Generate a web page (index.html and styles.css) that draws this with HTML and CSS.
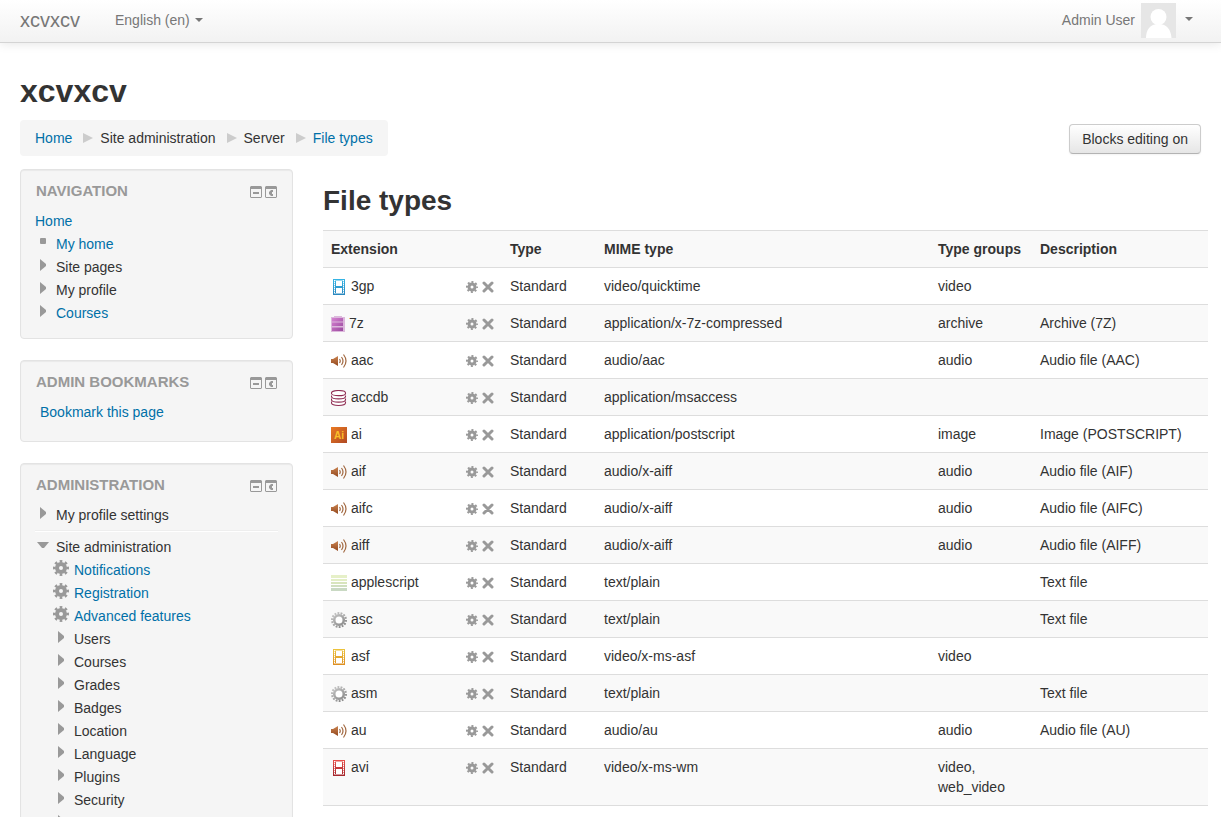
FILE: index.html
```
<!DOCTYPE html>
<html lang="en">

<head>
    <meta charset="UTF-8">
    <meta name="viewport" content="width=device-width, initial-scale=1.0">
    <title>File types</title>
    <link rel="stylesheet" href="styles.css">
</head>

<body>
    <!-- shared icons -->
    <svg class="sprite" aria-hidden="true">
        <defs>
            <linearGradient id="blue" x1="0" y1="0" x2="0" y2="1"><stop offset="0" stop-color="#35b5e5"/><stop offset="1" stop-color="#2a86bd"/></linearGradient>
            <linearGradient id="yellow" x1="0" y1="0" x2="0" y2="1"><stop offset="0" stop-color="#ecc43c"/><stop offset="1" stop-color="#dd8e22"/></linearGradient>
            <linearGradient id="red" x1="0" y1="0" x2="0" y2="1"><stop offset="0" stop-color="#e8504c"/><stop offset="1" stop-color="#a3262c"/></linearGradient>
            <linearGradient id="purple" x1="0" y1="0" x2="1" y2="1"><stop offset="0" stop-color="#d682d2"/><stop offset="1" stop-color="#9a4a9e"/></linearGradient>
            <linearGradient id="brown" x1="0" y1="0" x2="0" y2="1"><stop offset="0" stop-color="#c98350"/><stop offset="1" stop-color="#94491f"/></linearGradient>
            <linearGradient id="orange" x1="0" y1="0" x2="1" y2="1"><stop offset="0" stop-color="#ea7a22"/><stop offset="1" stop-color="#b04a24"/></linearGradient>
            <linearGradient id="grey" gradientUnits="userSpaceOnUse" x1="0" y1="0" x2="12" y2="16"><stop offset="0" stop-color="#cfcfcf"/><stop offset="1" stop-color="#858585"/></linearGradient>
        </defs>
        <symbol id="gear" viewBox="0 0 16 16">
            <circle cx="8" cy="8" r="4" fill="none" stroke="#999" stroke-width="4"/>
            <circle cx="8" cy="8" r="6.7" fill="none" stroke="#999" stroke-width="2.6" pathLength="16" stroke-dasharray="1 1" stroke-dashoffset=".5"/>
        </symbol>
        <symbol id="cross" viewBox="0 0 12 12">
            <path d="M2 2l8 8M10 2l-8 8" stroke="#999" stroke-width="3" stroke-linecap="round"/>
        </symbol>
        <symbol id="hide" viewBox="0 0 12 12">
            <path d="M1 0h10l1 1v10l-1 1H1l-1-1V1zM1 3v8h10V3z" fill="#999" fill-rule="evenodd"/>
            <path d="M3 6h6v2H3z" fill="#999"/>
        </symbol>
        <symbol id="dock" viewBox="0 0 12 12">
            <path d="M1 0h10l1 1v10l-1 1H1l-1-1V1zM1 3v8h10V3z" fill="#999" fill-rule="evenodd"/>
            <path d="M6 4h2v2H7v2h1v2H6L4 8V6z" fill="#999"/>
        </symbol>
        <symbol id="right" viewBox="0 0 16 16"><path d="M5 2l6 5v2l-6 5z" fill="#999"/></symbol>
        <symbol id="down" viewBox="0 0 16 16"><path d="M2 5h12l-5 6H7z" fill="#999"/></symbol>
        <symbol id="bullet" viewBox="0 0 16 16"><rect x="5" y="4" width="6" height="6" rx="1" fill="#999"/></symbol>
        <symbol id="audio" viewBox="0 0 16 16">
            <path d="M0 6h2l5-3v10l-5-3H0z" fill="url(#brown)"/>
            <path d="M8.500 6q1.500 2 0 4M10.500 4q3 4 0 8M12.500 1.500q5 6.500 0 13" fill="none" stroke="#a1673f" stroke-width="1.200"/>
        </symbol>
        <symbol id="db" viewBox="0 0 16 16">
            <g fill="#fff" stroke="#8f2c52" stroke-width="1.100">
                <path d="M.5 11.500v1.300c0 3.500 14 3.500 14 0v-1.300"/>
                <path d="M.5 8.500v1.200c0 3.200 14 3.200 14 0V8.500"/>
                <path d="M.5 5.500v1c0 3.200 14 3.200 14 0v-1"/>
                <path d="M.5 3c0-3.300 14-3.300 14 0v.4c0 3-14 3-14 0z"/>
            </g>
        </symbol>
        <symbol id="source" viewBox="0 0 16 16">
            <path d="M0 0h16v3H0z" fill="#e6f0c8"/><path d="M0 4h16v2H0z" fill="#e3eec6"/>
            <path d="M0 7h16v2H0z" fill="#d8e5bd"/><path d="M0 10h16v2H0z" fill="#d0dfc0"/>
            <path d="M0 13h16v3H0z" fill="#c9d9c3"/>
        </symbol>
        <symbol id="cog" viewBox="0 0 16 16">
            <circle cx="8" cy="8" r="4.800" fill="#fff" stroke="url(#grey)" stroke-width="2.600"/>
            <circle cx="8" cy="8" r="7" fill="none" stroke="url(#grey)" stroke-width="2" pathLength="28" stroke-dasharray="1.2 .8"/>
        </symbol>
        <symbol id="archive" viewBox="0 0 14 16">
            <path d="M0 1h3V0h8v1h3v15H0z" fill="#dcb8dc"/>
            <path d="M1 2h11v3.500H1zM1 6.500h11V10H1zM1 11.500h11V15H1z" fill="url(#purple)"/>
        </symbol>
        <symbol id="film" viewBox="0 0 16 16">
            <path d="M2 0h12v16H2z"/>
            <path d="M5 2h6v5H5zM5 9h6v5H5z" fill="#fff"/>
            <path d="M3 1h1v1H3zM3 3h1v1H3zM3 5h1v1H3zM3 7h1v1H3zM3 9h1v1H3zM3 11h1v1H3zM3 13h1v1H3zM12 1h1v1h-1zM12 3h1v1h-1zM12 5h1v1h-1zM12 7h1v1h-1zM12 9h1v1h-1zM12 11h1v1h-1zM12 13h1v1h-1z" fill="#fff"/>
            <path d="M3 1h1v14H3zM12 1h1v14h-1zM4 1h8v1H4zM4 14h8v1H4z" fill="#fff" opacity=".5"/>
        </symbol>
    </svg>

    <header class="navbar">
        <a class="brand" href="#">xcvxcv</a>
        <a class="lang" href="#">English (en)<span class="caret"></span></a>
        <a class="user" href="#">
            Admin User
            <svg class="avatar" viewBox="0 0 35 35">
                <rect width="35" height="35" fill="#e6e6e6"/>
                <circle cx="17.500" cy="14" r="8" fill="#fff"/>
                <path d="M5 35c0-8 4-14 12.500-14S30 27 30.500 35z" fill="#fff"/>
            </svg>
            <span class="caret"></span>
        </a>
    </header>

    <div class="page-header">
        <h1>xcvxcv</h1>
        <div class="page-nav">
            <nav class="breadcrumb">
                <a href="#">Home</a>
                <span class="sep"></span>
                <span>Site administration</span>
                <span class="sep"></span>
                <span>Server</span>
                <span class="sep"></span>
                <a href="#">File types</a>
            </nav>
            <button class="btn" type="button">Blocks editing on</button>
        </div>
    </div>

    <div class="content">
        <aside>
            <section class="block">
                <div class="block-header">
                    <h2>NAVIGATION</h2>
                    <div class="block-actions">
                        <svg><use href="#hide"/></svg>
                        <svg><use href="#dock"/></svg>
                    </div>
                </div>
                <ul class="tree">
                    <li><a href="#">Home</a></li>
                    <li><svg><use href="#bullet"/></svg><a href="#">My home</a></li>
                    <li><svg><use href="#right"/></svg>Site pages</li>
                    <li><svg><use href="#right"/></svg>My profile</li>
                    <li><svg><use href="#right"/></svg><a href="#">Courses</a></li>
                </ul>
            </section>

            <section class="block">
                <div class="block-header">
                    <h2>ADMIN BOOKMARKS</h2>
                    <div class="block-actions">
                        <svg><use href="#hide"/></svg>
                        <svg><use href="#dock"/></svg>
                    </div>
                </div>
                <p class="bookmark"><a href="#">Bookmark this page</a></p>
            </section>

            <section class="block">
                <div class="block-header">
                    <h2>ADMINISTRATION</h2>
                    <div class="block-actions">
                        <svg><use href="#hide"/></svg>
                        <svg><use href="#dock"/></svg>
                    </div>
                </div>
                <ul class="tree">
                    <li><svg><use href="#right"/></svg>My profile settings</li>
                </ul>
                <hr>
                <ul class="tree">
                    <li><svg><use href="#down"/></svg>Site administration</li>
                </ul>
                <ul class="tree sub">
                    <li><svg><use href="#gear"/></svg><a href="#">Notifications</a></li>
                    <li><svg><use href="#gear"/></svg><a href="#">Registration</a></li>
                    <li><svg><use href="#gear"/></svg><a href="#">Advanced features</a></li>
                    <li><svg><use href="#right"/></svg>Users</li>
                    <li><svg><use href="#right"/></svg>Courses</li>
                    <li><svg><use href="#right"/></svg>Grades</li>
                    <li><svg><use href="#right"/></svg>Badges</li>
                    <li><svg><use href="#right"/></svg>Location</li>
                    <li><svg><use href="#right"/></svg>Language</li>
                    <li><svg><use href="#right"/></svg>Plugins</li>
                    <li><svg><use href="#right"/></svg>Security</li>
                    <li><svg><use href="#right"/></svg></li>
                </ul>
            </section>
        </aside>

        <main>
            <h2>File types</h2>
            <table>
                <colgroup>
                    <col class="col-ext">
                    <col class="col-actions">
                    <col class="col-type">
                    <col>
                    <col class="col-groups">
                    <col class="col-desc">
                </colgroup>
                <thead>
                    <tr><th colspan="2">Extension</th><th>Type</th><th>MIME type</th><th>Type groups</th><th>Description</th></tr>
                </thead>
                <tbody>
                    <tr>
                        <td><svg class="icon" fill="url(#blue)"><use href="#film"/></svg> 3gp</td>
                        <td class="actions"><a href="#" aria-label="Edit 3gp"><svg><use href="#gear"/></svg></a> <a href="#" aria-label="Delete 3gp"><svg><use href="#cross"/></svg></a></td>
                        <td>Standard</td><td>video/quicktime</td><td>video</td><td></td>
                    </tr>
                    <tr>
                        <td><svg class="icon narrow"><use href="#archive"/></svg> 7z</td>
                        <td class="actions"><a href="#" aria-label="Edit 7z"><svg><use href="#gear"/></svg></a> <a href="#" aria-label="Delete 7z"><svg><use href="#cross"/></svg></a></td>
                        <td>Standard</td><td>application/x-7z-compressed</td><td>archive</td><td>Archive (7Z)</td>
                    </tr>
                    <tr>
                        <td><svg class="icon"><use href="#audio"/></svg> aac</td>
                        <td class="actions"><a href="#" aria-label="Edit aac"><svg><use href="#gear"/></svg></a> <a href="#" aria-label="Delete aac"><svg><use href="#cross"/></svg></a></td>
                        <td>Standard</td><td>audio/aac</td><td>audio</td><td>Audio file (AAC)</td>
                    </tr>
                    <tr>
                        <td><svg class="icon"><use href="#db"/></svg> accdb</td>
                        <td class="actions"><a href="#" aria-label="Edit accdb"><svg><use href="#gear"/></svg></a> <a href="#" aria-label="Delete accdb"><svg><use href="#cross"/></svg></a></td>
                        <td>Standard</td><td>application/msaccess</td><td></td><td></td>
                    </tr>
                    <tr>
                        <td><svg class="icon" viewBox="0 0 16 16"><rect width="16" height="16" fill="url(#orange)"/><text x="8" y="12" text-anchor="middle" font-size="10" font-weight="700" fill="#fbc02a">Ai</text></svg> ai</td>
                        <td class="actions"><a href="#" aria-label="Edit ai"><svg><use href="#gear"/></svg></a> <a href="#" aria-label="Delete ai"><svg><use href="#cross"/></svg></a></td>
                        <td>Standard</td><td>application/postscript</td><td>image</td><td>Image (POSTSCRIPT)</td>
                    </tr>
                    <tr>
                        <td><svg class="icon"><use href="#audio"/></svg> aif</td>
                        <td class="actions"><a href="#" aria-label="Edit aif"><svg><use href="#gear"/></svg></a> <a href="#" aria-label="Delete aif"><svg><use href="#cross"/></svg></a></td>
                        <td>Standard</td><td>audio/x-aiff</td><td>audio</td><td>Audio file (AIF)</td>
                    </tr>
                    <tr>
                        <td><svg class="icon"><use href="#audio"/></svg> aifc</td>
                        <td class="actions"><a href="#" aria-label="Edit aifc"><svg><use href="#gear"/></svg></a> <a href="#" aria-label="Delete aifc"><svg><use href="#cross"/></svg></a></td>
                        <td>Standard</td><td>audio/x-aiff</td><td>audio</td><td>Audio file (AIFC)</td>
                    </tr>
                    <tr>
                        <td><svg class="icon"><use href="#audio"/></svg> aiff</td>
                        <td class="actions"><a href="#" aria-label="Edit aiff"><svg><use href="#gear"/></svg></a> <a href="#" aria-label="Delete aiff"><svg><use href="#cross"/></svg></a></td>
                        <td>Standard</td><td>audio/x-aiff</td><td>audio</td><td>Audio file (AIFF)</td>
                    </tr>
                    <tr>
                        <td><svg class="icon"><use href="#source"/></svg> applescript</td>
                        <td class="actions"><a href="#" aria-label="Edit applescript"><svg><use href="#gear"/></svg></a> <a href="#" aria-label="Delete applescript"><svg><use href="#cross"/></svg></a></td>
                        <td>Standard</td><td>text/plain</td><td></td><td>Text file</td>
                    </tr>
                    <tr>
                        <td><svg class="icon"><use href="#cog"/></svg> asc</td>
                        <td class="actions"><a href="#" aria-label="Edit asc"><svg><use href="#gear"/></svg></a> <a href="#" aria-label="Delete asc"><svg><use href="#cross"/></svg></a></td>
                        <td>Standard</td><td>text/plain</td><td></td><td>Text file</td>
                    </tr>
                    <tr>
                        <td><svg class="icon" fill="url(#yellow)"><use href="#film"/></svg> asf</td>
                        <td class="actions"><a href="#" aria-label="Edit asf"><svg><use href="#gear"/></svg></a> <a href="#" aria-label="Delete asf"><svg><use href="#cross"/></svg></a></td>
                        <td>Standard</td><td>video/x-ms-asf</td><td>video</td><td></td>
                    </tr>
                    <tr>
                        <td><svg class="icon"><use href="#cog"/></svg> asm</td>
                        <td class="actions"><a href="#" aria-label="Edit asm"><svg><use href="#gear"/></svg></a> <a href="#" aria-label="Delete asm"><svg><use href="#cross"/></svg></a></td>
                        <td>Standard</td><td>text/plain</td><td></td><td>Text file</td>
                    </tr>
                    <tr>
                        <td><svg class="icon"><use href="#audio"/></svg> au</td>
                        <td class="actions"><a href="#" aria-label="Edit au"><svg><use href="#gear"/></svg></a> <a href="#" aria-label="Delete au"><svg><use href="#cross"/></svg></a></td>
                        <td>Standard</td><td>audio/au</td><td>audio</td><td>Audio file (AU)</td>
                    </tr>
                    <tr>
                        <td><svg class="icon" fill="url(#red)"><use href="#film"/></svg> avi</td>
                        <td class="actions"><a href="#" aria-label="Edit avi"><svg><use href="#gear"/></svg></a> <a href="#" aria-label="Delete avi"><svg><use href="#cross"/></svg></a></td>
                        <td>Standard</td><td>video/x-ms-wm</td><td>video, web_video</td><td></td>
                    </tr>
                </tbody>
            </table>
        </main>
    </div>
</body>

</html>
```
FILE: styles.css
```
body {
    margin: 0;
    font-family: "Liberation Sans", Arial, sans-serif;
    font-size: 14px;
    line-height: 20px;
    color: #333;
    background: #fff;
}

a {
    color: #0070a8;
    text-decoration: none;
}

h1,
h2,
p,
ul {
    margin: 0;
    padding: 0;
}

.sprite {
    position: absolute;
    width: 0;
    height: 0;
}

/* top bar */
.navbar {
    display: flex;
    align-items: center;
    height: 40px;
    padding: 0 28px 2px 20px;
    background: linear-gradient(#fff, #f2f2f2);
    border-bottom: 1px solid #d4d4d4;
    box-shadow: 0 1px 10px rgba(0, 0, 0, 0.1);
}

.navbar a {
    display: flex;
    align-items: center;
    color: #777;
}

.navbar .brand {
    font-size: 20px;
}

.lang {
    gap: 5px;
    margin-left: 35px;
}

.user {
    gap: 6px;
    margin-left: auto;
}

.user .caret {
    margin: 0 0 3px 3px;
}

.avatar {
    width: 35px;
    height: 35px;
}

.caret {
    border-top: 4px solid #777;
    border-left: 4px solid transparent;
    border-right: 4px solid transparent;
}

/* page header */
.page-header {
    padding: 28px 20px 13px;
}

h1 {
    font-size: 32px;
    line-height: 40px;
    margin-bottom: 9px;
}

.page-nav {
    display: flex;
    justify-content: space-between;
}

.breadcrumb {
    display: flex;
    align-items: center;
    padding: 8px 15px;
    background: #f5f5f5;
    border-radius: 4px;
}

.sep {
    margin: 0 7px 0 11px;
    border-left: 10px solid #ccc;
    border-top: 5px solid transparent;
    border-bottom: 5px solid transparent;
}

.btn {
    height: 30px;
    margin-top: 4px;
    padding: 0 12px;
    font: inherit;
    color: #333;
    background: linear-gradient(#fff, #e6e6e6);
    border: 1px solid #ccc;
    border-bottom-color: #b3b3b3;
    border-radius: 4px;
    box-shadow: 0 1px 2px rgba(0, 0, 0, 0.05);
}

/* columns */
.content {
    display: grid;
    grid-template-columns: 273px 1fr;
    gap: 30px;
    padding: 0 13px 0 20px;
}

.block {
    margin-bottom: 21px;
    padding: 11px 14px 13px;
    background: #f5f5f5;
    border: 1px solid #e3e3e3;
    border-radius: 4px;
    box-shadow: inset 0 1px 1px rgba(0, 0, 0, 0.05);
}

.block-header {
    display: flex;
    justify-content: space-between;
    padding: 0 1px;
    margin-bottom: 9px;
}

.block-header h2 {
    font-size: 15px;
    line-height: 20px;
    color: #999;
}

.block-actions {
    display: flex;
    gap: 3px;
    padding-top: 5px;
}

.block-actions svg {
    width: 12px;
    height: 12px;
}

.tree {
    list-style: none;
}

.tree li {
    display: flex;
    gap: 5px;
    height: 23px;
    line-height: 23px;
}

.tree svg {
    width: 16px;
    height: 16px;
    margin-top: 1px;
}

.sub {
    padding-left: 18px;
}

.bookmark {
    padding-left: 5px;
    margin-bottom: 4px;
    line-height: 23px;
}

hr {
    margin: 3px 0 4px;
    border: none;
    border-top: 1px solid #eee;
    border-bottom: 1px solid #fff;
}

/* file types table */
main h2 {
    margin: 12px 0 9px;
    font-size: 28px;
    line-height: 40px;
}

table {
    width: 100%;
    table-layout: fixed;
    border-collapse: separate;
    border-spacing: 0;
    border-bottom: 1px solid #ddd;
}

.col-ext {
    width: 135px;
}

.col-actions {
    width: 44px;
}

.col-type {
    width: 94px;
}

.col-groups {
    width: 102px;
}

.col-desc {
    width: 176px;
}

th,
td {
    padding: 8px;
    text-align: left;
    vertical-align: top;
    border-top: 1px solid #ddd;
}

th {
    white-space: nowrap;
}

thead tr,
tbody tr:nth-child(even) {
    background: #f9f9f9;
}

.icon {
    width: 16px;
    height: 16px;
    vertical-align: -4px;
}

.narrow {
    width: 14px;
}

.actions {
    white-space: nowrap;
}

.actions svg {
    width: 12px;
    height: 12px;
    vertical-align: middle;
}
```
